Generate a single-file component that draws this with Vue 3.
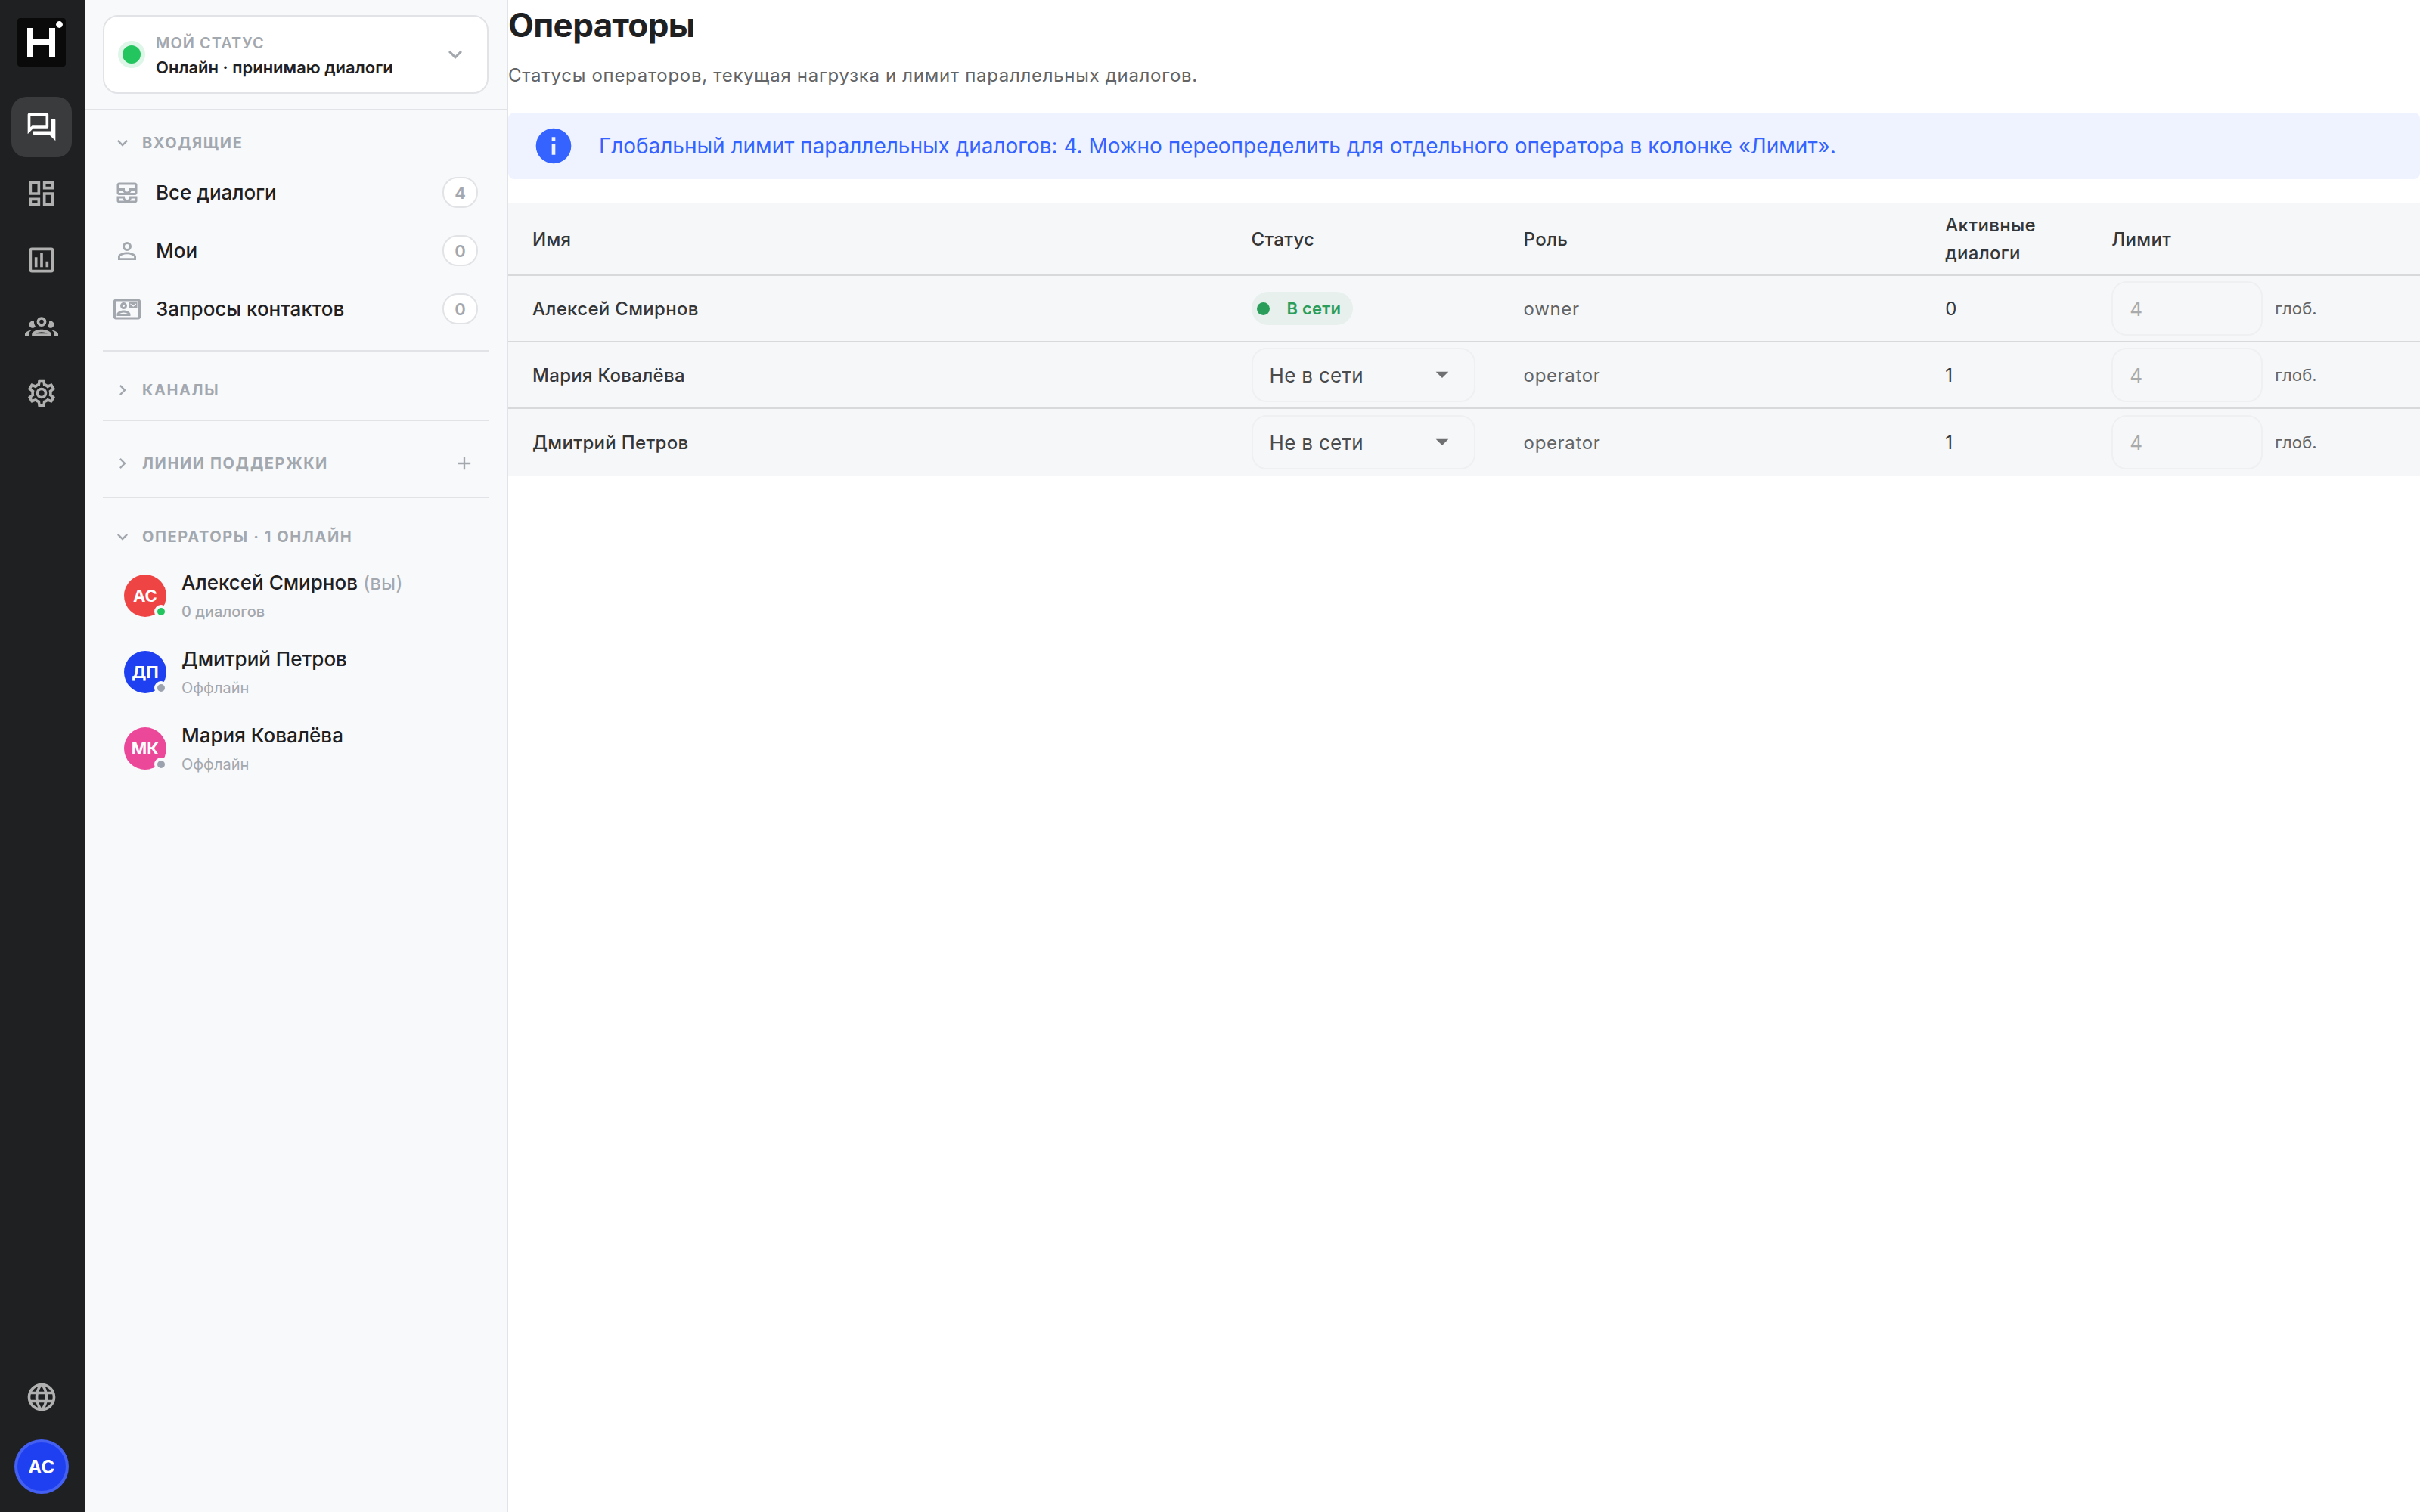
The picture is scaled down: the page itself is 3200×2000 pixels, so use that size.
<script setup>
const icons = {
  forum: 'M15 4v7H5.17L4 12.17V4h11m1-2H3a1 1 0 0 0-1 1v14l4-4h10a1 1 0 0 0 1-1V3a1 1 0 0 0-1-1zm5 4h-2v9H6v2a1 1 0 0 0 1 1h11l4 4V7a1 1 0 0 0-1-1z',
  dashboard: 'M19 5v2h-4V5h4M9 5v6H5V5h4m10 8v6h-4v-6h4M9 17v2H5v-2h4M21 3h-8v6h8V3zM11 3H3v10h8V3zm10 8h-8v10h8V11zm-10 4H3v6h8v-6z',
  chart: 'M9 17H7v-7h2v7zm4 0h-2V7h2v10zm4 0h-2v-4h2v4zm2 2H5V5h14v14zm0-16H5a2 2 0 0 0-2 2v14a2 2 0 0 0 2 2h14a2 2 0 0 0 2-2V5a2 2 0 0 0-2-2z',
  group: 'M12,5A3.5,3.5 0 0,0 8.5,8.5A3.5,3.5 0 0,0 12,12A3.5,3.5 0 0,0 15.5,8.5A3.5,3.5 0 0,0 12,5M12,7A1.5,1.5 0 0,1 13.5,8.5A1.5,1.5 0 0,1 12,10A1.5,1.5 0 0,1 10.5,8.5A1.5,1.5 0 0,1 12,7M5.5,8A2.5,2.5 0 0,0 3,10.5C3,11.44 3.53,12.25 4.29,12.68C4.65,12.88 5.06,13 5.5,13C5.94,13 6.35,12.88 6.71,12.68C7.08,12.47 7.39,12.17 7.62,11.81C6.89,10.86 6.5,9.7 6.5,8.5C6.5,8.41 6.5,8.31 6.5,8.22C6.2,8.08 5.86,8 5.5,8M18.5,8C18.14,8 17.8,8.08 17.5,8.22C17.5,8.31 17.5,8.41 17.5,8.5C17.5,9.7 17.11,10.86 16.38,11.81C16.5,12 16.63,12.15 16.78,12.3C16.94,12.45 17.1,12.58 17.29,12.68C17.65,12.88 18.06,13 18.5,13C18.94,13 19.35,12.88 19.71,12.68C20.47,12.25 21,11.44 21,10.5A2.5,2.5 0 0,0 18.5,8M12,14C9.66,14 5,15.17 5,17.5V19H19V17.5C19,15.17 14.34,14 12,14M4.71,14.55C2.78,14.78 0,15.76 0,17.5V19H3V17.07C3,16.06 3.69,15.22 4.71,14.55M19.29,14.55C20.31,15.22 21,16.06 21,17.07V19H24V17.5C24,15.76 21.22,14.78 19.29,14.55M12,16C13.53,16 15.24,16.5 16.23,17H7.77C8.76,16.5 10.47,16 12,16Z',
  cog: 'M12,8A4,4 0 0,1 16,12A4,4 0 0,1 12,16A4,4 0 0,1 8,12A4,4 0 0,1 12,8M12,10A2,2 0 0,0 10,12A2,2 0 0,0 12,14A2,2 0 0,0 14,12A2,2 0 0,0 12,10M10,22C9.75,22 9.54,21.82 9.5,21.58L9.13,18.93C8.5,18.68 7.96,18.34 7.44,17.94L4.95,18.95C4.73,19.03 4.46,18.95 4.34,18.73L2.34,15.27C2.21,15.05 2.27,14.78 2.46,14.63L4.57,12.97L4.5,12L4.57,11L2.46,9.37C2.27,9.22 2.21,8.95 2.34,8.73L4.34,5.27C4.46,5.05 4.73,4.96 4.95,5.05L7.44,6.05C7.96,5.66 8.5,5.32 9.13,5.07L9.5,2.42C9.54,2.18 9.75,2 10,2H14C14.25,2 14.46,2.18 14.5,2.42L14.87,5.07C15.5,5.32 16.04,5.66 16.56,6.05L19.05,5.05C19.27,4.96 19.54,5.05 19.66,5.27L21.66,8.73C21.79,8.95 21.73,9.22 21.54,9.37L19.43,11L19.5,12L19.43,13L21.54,14.63C21.73,14.78 21.79,15.05 21.66,15.27L19.66,18.73C19.54,18.95 19.27,19.04 19.05,18.95L16.56,17.95C16.04,18.34 15.5,18.68 14.87,18.93L14.5,21.58C14.46,21.82 14.25,22 14,22H10M11.25,4L10.88,6.61C9.68,6.86 8.62,7.5 7.85,8.39L5.44,7.35L4.69,8.65L6.8,10.2C6.4,11.37 6.4,12.64 6.8,13.8L4.68,15.36L5.43,16.66L7.86,15.62C8.63,16.5 9.68,17.14 10.87,17.38L11.24,20H12.76L13.13,17.39C14.32,17.14 15.37,16.5 16.14,15.62L18.57,16.66L19.32,15.36L17.2,13.81C17.6,12.64 17.6,11.37 17.2,10.2L19.31,8.65L18.56,7.35L16.15,8.39C15.38,7.5 14.32,6.86 13.12,6.62L12.75,4H11.25Z',
  globe: 'M16.36,14C16.44,13.34 16.5,12.68 16.5,12C16.5,11.32 16.44,10.66 16.36,10H19.74C19.9,10.64 20,11.31 20,12C20,12.69 19.9,13.36 19.74,14M14.59,19.56C15.19,18.45 15.65,17.25 15.97,16H18.92C17.96,17.65 16.43,18.93 14.59,19.56M14.34,14H9.66C9.56,13.34 9.5,12.68 9.5,12C9.5,11.32 9.56,10.65 9.66,10H14.34C14.43,10.65 14.5,11.32 14.5,12C14.5,12.68 14.43,13.34 14.34,14M12,19.96C11.17,18.76 10.5,17.43 10.09,16H13.91C13.5,17.43 12.83,18.76 12,19.96M8,8H5.08C6.03,6.34 7.57,5.06 9.4,4.44C8.8,5.55 8.35,6.75 8,8M5.08,16H8C8.35,17.25 8.8,18.45 9.4,19.56C7.57,18.93 6.03,17.65 5.08,16M4.26,14C4.1,13.36 4,12.69 4,12C4,11.31 4.1,10.64 4.26,10H7.64C7.56,10.66 7.5,11.32 7.5,12C7.5,12.68 7.56,13.34 7.64,14M12,4.03C12.83,5.23 13.5,6.57 13.91,8H10.09C10.5,6.57 11.17,5.23 12,4.03M18.92,8H15.97C15.65,6.75 15.19,5.55 14.59,4.44C16.43,5.07 17.96,6.34 18.92,8M12,2C6.47,2 2,6.5 2,12A10,10 0 0,0 12,22A10,10 0 0,0 22,12A10,10 0 0,0 12,2Z',
  inbox: 'M19 3H5c-1.1 0-2 .9-2 2v7c0 1.1.9 2 2 2h14c1.1 0 2-.9 2-2V5c0-1.1-.9-2-2-2zM5 10h3.13c.21.78.67 1.47 1.27 2H5v-2zm14 2h-4.4c.6-.53 1.06-1.22 1.27-2H19v2zm0-4h-5v1c0 1.07-.93 2-2 2s-2-.93-2-2V8H5V5h14v3zm-5 7v1c0 .47-.19.9-.48 1.25-.37.45-.92.75-1.52.75s-1.15-.3-1.52-.75c-.29-.35-.48-.78-.48-1.25v-1H3v4c0 1.1.9 2 2 2h14c1.1 0 2-.9 2-2v-4h-7zm-9 2h3.13c.02.09.06.17.09.25.24.68.65 1.28 1.18 1.75H5v-2zm14 2h-4.4c.54-.47.95-1.07 1.18-1.75.03-.08.07-.16.09-.25H19v2z',
  person: 'M12,4A4,4 0 0,1 16,8A4,4 0 0,1 12,12A4,4 0 0,1 8,8A4,4 0 0,1 12,4M12,6A2,2 0 0,0 10,8A2,2 0 0,0 12,10A2,2 0 0,0 14,8A2,2 0 0,0 12,6M12,13C14.67,13 20,14.33 20,17V20H4V17C4,14.33 9.33,13 12,13M12,14.9C9.03,14.9 5.9,16.36 5.9,17V18.1H18.1V17C18.1,16.36 14.97,14.9 12,14.9Z',
  contact: 'M22 3H2C.9 3 0 3.9 0 5v14c0 1.1.9 2 2 2h20c1.1 0 2-.9 2-2V5c0-1.1-.9-2-2-2zm0 16H2V5h20v14zM21 6h-7v5h7V6zm-1 2l-2.5 1.75L15 8V7l2.5 1.75L20 7v1zM9 12c1.65 0 3-1.35 3-3s-1.35-3-3-3-3 1.35-3 3 1.35 3 3 3zm0-4c.55 0 1 .45 1 1s-.45 1-1 1-1-.45-1-1 .45-1 1-1zm6 8.59c0-2.5-3.97-3.58-6-3.58s-6 1.08-6 3.58V18h12v-1.41zM5.48 16c.74-.5 2.22-1 3.52-1s2.77.49 3.52 1H5.48z',
  down: 'M7.41,8.58L12,13.17L16.59,8.58L18,10L12,16L6,10L7.41,8.58Z',
  right: 'M8.59,16.58L13.17,12L8.59,7.41L10,6L16,12L10,18L8.59,16.58Z',
  plus: 'M19,13H13V19H11V13H5V11H11V5H13V11H19V13Z',
  info: 'M13,9H11V7H13M13,17H11V11H13M12,2A10,10 0 0,0 2,12A10,10 0 0,0 12,22A10,10 0 0,0 22,12A10,10 0 0,0 12,2Z',
  caret: 'M7,10L12,15L17,10H7Z'
}

const nav = ['forum', 'dashboard', 'chart', 'group', 'cog']

const inbox = [
  { icon: 'inbox', label: 'Все диалоги', count: 4 },
  { icon: 'person', label: 'Мои', count: 0 },
  { icon: 'contact', label: 'Запросы контактов', count: 0 }
]

const team = [
  { initials: 'АС', tone: 'red', name: 'Алексей Смирнов', me: true, note: '0 диалогов', online: true },
  { initials: 'ДП', tone: 'blue', name: 'Дмитрий Петров', note: 'Оффлайн' },
  { initials: 'МК', tone: 'pink', name: 'Мария Ковалёва', note: 'Оффлайн' }
]

const operators = [
  { name: 'Алексей Смирнов', online: true, role: 'owner', active: 0, limit: 4 },
  { name: 'Мария Ковалёва', online: false, role: 'operator', active: 1, limit: 4 },
  { name: 'Дмитрий Петров', online: false, role: 'operator', active: 1, limit: 4 }
]
</script>

<template>
  <div class="app">
    <nav class="rail">
      <svg class="logo" viewBox="0 0 64 64">
        <rect width="64" height="64" rx="4" fill="#0a0a0a" />
        <path d="M13 13h8v15h21V13h8v38h-8V36H21v15h-8z" fill="#fff" />
        <circle cx="55.5" cy="8.5" r="4.4" fill="#fff" />
      </svg>
      <div class="rail-nav">
        <a v-for="(n, i) in nav" :key="n" class="rail-item" :class="{ active: i === 0 }">
          <svg viewBox="0 0 24 24"><path :d="icons[n]" /></svg>
        </a>
      </div>
      <a class="rail-item globe">
        <svg viewBox="0 0 24 24"><path :d="icons.globe" /></svg>
      </a>
      <div class="me">АС</div>
    </nav>

    <aside class="sidebar">
      <div class="status-wrap">
        <div class="status-card">
          <span class="status-dot"></span>
          <div class="status-text">
            <div class="status-label">МОЙ СТАТУС</div>
            <div class="status-value">Онлайн · принимаю диалоги</div>
          </div>
          <svg class="i36" viewBox="0 0 24 24"><path :d="icons.down" /></svg>
        </div>
      </div>

      <section class="group first">
        <div class="heading"><svg viewBox="0 0 24 24"><path :d="icons.down" /></svg><span>ВХОДЯЩИЕ</span></div>
        <div v-for="item in inbox" :key="item.label" class="item">
          <svg class="i36" viewBox="0 0 24 24"><path :d="icons[item.icon]" /></svg>
          <span class="item-label">{{ item.label }}</span>
          <span class="count">{{ item.count }}</span>
        </div>
      </section>

      <section class="group">
        <div class="heading"><svg viewBox="0 0 24 24"><path :d="icons.right" /></svg><span>КАНАЛЫ</span></div>
      </section>

      <section class="group">
        <div class="heading tall">
          <svg viewBox="0 0 24 24"><path :d="icons.right" /></svg><span>ЛИНИИ ПОДДЕРЖКИ</span>
          <svg class="add" viewBox="0 0 24 24"><path :d="icons.plus" /></svg>
        </div>
      </section>

      <section class="group last">
        <div class="heading"><svg viewBox="0 0 24 24"><path :d="icons.down" /></svg><span>ОПЕРАТОРЫ · 1 ОНЛАЙН</span></div>
        <div v-for="p in team" :key="p.name" class="person">
          <div class="avatar" :class="p.tone">{{ p.initials }}<i :class="{ on: p.online }"></i></div>
          <div>
            <div class="person-name">{{ p.name }} <span v-if="p.me">(вы)</span></div>
            <div class="person-note" :class="{ medium: p.online }">{{ p.note }}</div>
          </div>
        </div>
      </section>
    </aside>

    <main class="main">
      <h1>Операторы</h1>
      <p class="sub">Статусы операторов, текущая нагрузка и лимит параллельных диалогов.</p>
      <div class="alert">
        <svg viewBox="0 0 24 24"><path :d="icons.info" /></svg>
        <span>Глобальный лимит параллельных диалогов: 4. Можно переопределить для отдельного оператора в колонке «Лимит».</span>
      </div>

      <div class="table">
        <div class="row head">
          <div>Имя</div>
          <div>Статус</div>
          <div>Роль</div>
          <div>Активные диалоги</div>
          <div>Лимит</div>
        </div>
        <div v-for="o in operators" :key="o.name" class="row">
          <div class="name">{{ o.name }}</div>
          <div>
            <span v-if="o.online" class="chip"><i></i>В сети</span>
            <span v-else class="select">Не в сети<svg viewBox="0 0 24 24"><path :d="icons.caret" /></svg></span>
          </div>
          <div class="role">{{ o.role }}</div>
          <div class="num">{{ o.active }}</div>
          <div class="limit"><span class="field">{{ o.limit }}</span><span class="hint">глоб.</span></div>
        </div>
      </div>
    </main>
  </div>
</template>

<style>
body {
  margin: 0;
  background: #fff;
}
</style>

<style scoped>
* {
  box-sizing: border-box;
}

.app {
  display: flex;
  width: 3200px;
  height: 2000px;
  font-family: Inter, 'Noto Sans', sans-serif;
  color: #1f2021;
  background: #fff;
  overflow: hidden;
}

svg {
  display: block;
  flex: none;
  fill: currentColor;
}

.rail {
  flex: none;
  display: flex;
  flex-direction: column;
  align-items: center;
  width: 112px;
  padding: 24px 2px 24px 0;
  background: #1f2021;
}

.logo {
  width: 64px;
  height: 64px;
}

.rail-nav {
  display: flex;
  flex-direction: column;
  gap: 8px;
  margin-top: 40px;
}

.rail-item {
  display: flex;
  align-items: center;
  justify-content: center;
  width: 80px;
  height: 80px;
  border-radius: 20px;
  color: #b0b0b0;
}

.rail-item svg {
  width: 44px;
  height: 44px;
}

.rail-item.active {
  background: #3a3b3c;
  color: #fff;
}

.globe {
  margin-top: auto;
}

.me {
  display: flex;
  align-items: center;
  justify-content: center;
  width: 72px;
  height: 72px;
  margin-top: 16px;
  border: 4px solid #4460f3;
  border-radius: 50%;
  background: #1f40f0;
  color: #fff;
  font-size: 24px;
  font-weight: 700;
  letter-spacing: 0.5px;
}

.sidebar {
  flex: none;
  width: 560px;
  border-right: 2px solid #e2e3e6;
  background: #f8f9fb;
}

.status-wrap {
  padding: 20px 24px;
  border-bottom: 2px solid #e2e3e6;
}

.status-card {
  display: flex;
  align-items: center;
  height: 104px;
  padding: 0 24px;
  border: 2px solid #e2e3e6;
  border-radius: 20px;
  background: #fff;
  color: #a3a8af;
}

.status-dot {
  width: 24px;
  height: 24px;
  border-radius: 50%;
  background: #22c55e;
  box-shadow: 0 0 0 6px #def6e7;
}

.status-text {
  flex: 1;
  margin-left: 20px;
  padding-top: 2px;
  line-height: 32px;
  white-space: nowrap;
}

.status-label {
  font-size: 20px;
  font-weight: 600;
  letter-spacing: 1px;
}

.status-value {
  color: #1f2021;
  font-size: 22px;
  font-weight: 600;
}

.i36 {
  width: 36px;
  height: 36px;
}

.group {
  margin: 0 24px;
  padding: 24px 0 12px;
  border-bottom: 2px solid #e2e3e6;
  color: #a3a8af;
}

.group.first {
  padding: 16px 0;
}

.group.last {
  border-bottom: 0;
}

.heading {
  display: flex;
  align-items: center;
  gap: 12px;
  height: 54px;
  padding: 0 18px 0 12px;
  font-size: 20px;
  font-weight: 700;
  letter-spacing: 1.6px;
  white-space: nowrap;
}

.heading.tall {
  height: 64px;
}

.heading svg {
  width: 28px;
  height: 28px;
}

.heading .add {
  margin-left: auto;
}

.item {
  display: flex;
  align-items: center;
  height: 77px;
  padding: 0 14px;
}

.item-label {
  flex: 1;
  margin-left: 20px;
  color: #1f2021;
  font-size: 26px;
  font-weight: 500;
  white-space: nowrap;
}

.count {
  display: flex;
  align-items: center;
  justify-content: center;
  width: 47px;
  height: 41px;
  border: 2px solid #e2e3e6;
  border-radius: 20px;
  background: #fff;
  font-size: 22px;
  font-weight: 600;
}

.person {
  display: flex;
  align-items: center;
  gap: 20px;
  height: 101px;
  padding-left: 28px;
}

.avatar {
  position: relative;
  display: flex;
  align-items: center;
  justify-content: center;
  width: 56px;
  height: 56px;
  border-radius: 50%;
  color: #fff;
  font-size: 22px;
  font-weight: 700;
}

.red {
  background: #ef4444;
}

.blue {
  background: #1f40f0;
}

.pink {
  background: #ec4899;
}

.avatar i {
  position: absolute;
  right: -2px;
  bottom: -2px;
  width: 18px;
  height: 18px;
  border: 4px solid #f8f9fb;
  border-radius: 50%;
  background: #9ca3af;
}

.avatar i.on {
  background: #22c55e;
}

.person-name {
  color: #1f2021;
  font-size: 26px;
  font-weight: 500;
  line-height: 39px;
  white-space: nowrap;
}

.person-name span {
  color: #a3a8af;
  font-weight: 400;
}

.person-note {
  margin-top: 4px;
  font-size: 20px;
  line-height: 30px;
}

.person-note.medium {
  font-weight: 500;
}

.main {
  flex: 1;
  min-width: 0;
}

h1 {
  margin: 0;
  font-size: 44px;
  font-weight: 700;
  line-height: 66px;
  letter-spacing: -0.64px;
}

.sub {
  margin: 16px 0 0;
  color: #636465;
  font-size: 24px;
  line-height: 36px;
  letter-spacing: 0.7px;
}

.alert {
  display: flex;
  align-items: center;
  gap: 32px;
  height: 88px;
  margin-top: 31px;
  padding: 0 32px;
  border-radius: 8px;
  background: #eff3ff;
  color: #3563ff;
  font-size: 28px;
  letter-spacing: -0.025px;
  white-space: nowrap;
}

.alert svg {
  width: 56px;
  height: 56px;
}

.table {
  margin-top: 32px;
  background: #f6f7f9;
  color: #353637;
  font-size: 24px;
}

.row {
  display: grid;
  grid-template-columns: 950.6px 360px 557.7px 220px 1fr;
  align-items: center;
  height: 88px;
  border-bottom: 2px solid #d8d9db;
}

.row:last-child {
  border-bottom: 0;
}

.row > div {
  padding: 0 32px;
}

.head {
  height: 96px;
  font-weight: 500;
  line-height: 37px;
  letter-spacing: 0.32px;
}

.name {
  font-weight: 500;
  letter-spacing: 0.32px;
}

.role {
  color: #636465;
  letter-spacing: 0.65px;
}

.chip {
  display: flex;
  align-items: center;
  width: 134px;
  height: 44px;
  padding-left: 7px;
  border-radius: 22px;
  background: #e7f0ec;
  color: #2a9d5b;
  font-size: 22px;
  font-weight: 600;
  letter-spacing: 0.2px;
  white-space: nowrap;
}

.chip i {
  width: 17px;
  height: 17px;
  margin-right: 23px;
  border-radius: 50%;
  background: currentColor;
}

.select,
.field {
  display: flex;
  align-items: center;
  height: 72px;
  padding: 0 22px;
  border: 2px solid #eff0f2;
  border-radius: 20px;
  font-size: 26px;
}

.select {
  justify-content: space-between;
  width: 296px;
  color: #4a4b4c;
  letter-spacing: 0.3px;
}

.select svg {
  width: 40px;
  height: 40px;
  margin-bottom: 2px;
  color: #6f7071;
}

.limit {
  display: flex;
  align-items: center;
  gap: 16px;
}

.field {
  width: 200px;
  color: #a9aaab;
}

.hint {
  color: #636465;
  font-size: 22px;
  letter-spacing: 0.15px;
}
</style>
